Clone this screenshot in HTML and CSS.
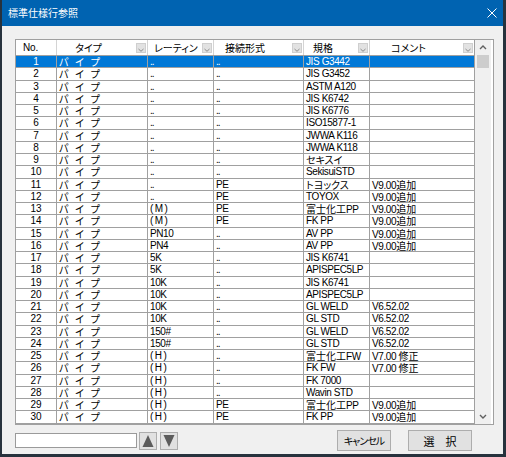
FILE: index.html
```html
<!DOCTYPE html>
<html lang="ja">
<head>
<meta charset="utf-8">
<title>標準仕様行参照</title>
<link rel="stylesheet" href="styles.css">
</head>
<body>
<div class="window">
  <div class="titlebar">
    <span class="title">標準仕様行参照</span>
    <svg class="close" width="10" height="10" viewBox="0 0 10 10"><path d="M0.5 0.5 L9.5 9.5 M9.5 0.5 L0.5 9.5" stroke="#fff" stroke-width="1" fill="none"/></svg>
  </div>
  <div class="content">
    <div class="grid">
      <div class="table">
        <div class="hrow">
          <div class="hcell"><span class="hlabel nolabel">No.</span></div>
          <div class="hcell"><span class="hlabel">タイプ</span><svg class="dd" width="10" height="10" viewBox="0 0 10 10"><rect x="0.5" y="0.5" width="9" height="9" fill="#e2e2e2" stroke="#cfcfcf"/><path d="M2.5 6 L5 8.3 L7.5 6" stroke="#8a8a8a" stroke-width="1" fill="none"/></svg></div>
          <div class="hcell"><span class="hlabel leftlabel">レーティン</span><svg class="dd" width="10" height="10" viewBox="0 0 10 10"><rect x="0.5" y="0.5" width="9" height="9" fill="#e2e2e2" stroke="#cfcfcf"/><path d="M2.5 6 L5 8.3 L7.5 6" stroke="#8a8a8a" stroke-width="1" fill="none"/></svg></div>
          <div class="hcell"><span class="hlabel">接続形式</span><svg class="dd" width="10" height="10" viewBox="0 0 10 10"><rect x="0.5" y="0.5" width="9" height="9" fill="#e2e2e2" stroke="#cfcfcf"/><path d="M2.5 6 L5 8.3 L7.5 6" stroke="#8a8a8a" stroke-width="1" fill="none"/></svg></div>
          <div class="hcell"><span class="hlabel">規格</span><svg class="dd" width="10" height="10" viewBox="0 0 10 10"><rect x="0.5" y="0.5" width="9" height="9" fill="#e2e2e2" stroke="#cfcfcf"/><path d="M2.5 6 L5 8.3 L7.5 6" stroke="#8a8a8a" stroke-width="1" fill="none"/></svg></div>
          <div class="hcell"><span class="hlabel">コメント</span><svg class="dd" width="10" height="10" viewBox="0 0 10 10"><rect x="0.5" y="0.5" width="9" height="9" fill="#e2e2e2" stroke="#cfcfcf"/><path d="M2.5 6 L5 8.3 L7.5 6" stroke="#8a8a8a" stroke-width="1" fill="none"/></svg></div>
        </div>
        <div class="row sel"><div class="cell num">1</div><div class="cell ja type">パ イ プ</div><div class="cell"><span class="nil">..</span></div><div class="cell"><span class="nil">..</span></div><div class="cell">JIS G3442</div><div class="cell"></div></div>
        <div class="row"><div class="cell num">2</div><div class="cell ja type">パ イ プ</div><div class="cell"><span class="nil">..</span></div><div class="cell"><span class="nil">..</span></div><div class="cell">JIS G3452</div><div class="cell"></div></div>
        <div class="row"><div class="cell num">3</div><div class="cell ja type">パ イ プ</div><div class="cell"><span class="nil">..</span></div><div class="cell"><span class="nil">..</span></div><div class="cell">ASTM A120</div><div class="cell"></div></div>
        <div class="row"><div class="cell num">4</div><div class="cell ja type">パ イ プ</div><div class="cell"><span class="nil">..</span></div><div class="cell"><span class="nil">..</span></div><div class="cell">JIS K6742</div><div class="cell"></div></div>
        <div class="row"><div class="cell num">5</div><div class="cell ja type">パ イ プ</div><div class="cell"><span class="nil">..</span></div><div class="cell"><span class="nil">..</span></div><div class="cell">JIS K6776</div><div class="cell"></div></div>
        <div class="row"><div class="cell num">6</div><div class="cell ja type">パ イ プ</div><div class="cell"><span class="nil">..</span></div><div class="cell"><span class="nil">..</span></div><div class="cell">ISO15877-1</div><div class="cell"></div></div>
        <div class="row"><div class="cell num">7</div><div class="cell ja type">パ イ プ</div><div class="cell"><span class="nil">..</span></div><div class="cell"><span class="nil">..</span></div><div class="cell">JWWA K116</div><div class="cell"></div></div>
        <div class="row"><div class="cell num">8</div><div class="cell ja type">パ イ プ</div><div class="cell"><span class="nil">..</span></div><div class="cell"><span class="nil">..</span></div><div class="cell">JWWA K118</div><div class="cell"></div></div>
        <div class="row"><div class="cell num">9</div><div class="cell ja type">パ イ プ</div><div class="cell"><span class="nil">..</span></div><div class="cell"><span class="nil">..</span></div><div class="cell"><span class="ja">セキスイ</span></div><div class="cell"></div></div>
        <div class="row"><div class="cell num">10</div><div class="cell ja type">パ イ プ</div><div class="cell"><span class="nil">..</span></div><div class="cell"><span class="nil">..</span></div><div class="cell">SekisuiSTD</div><div class="cell"></div></div>
        <div class="row"><div class="cell num">11</div><div class="cell ja type">パ イ プ</div><div class="cell"><span class="nil">..</span></div><div class="cell">PE</div><div class="cell"><span class="ja">トヨックス</span></div><div class="cell">V9.00<span class="ja">追加</span></div></div>
        <div class="row"><div class="cell num">12</div><div class="cell ja type">パ イ プ</div><div class="cell"><span class="nil">..</span></div><div class="cell">PE</div><div class="cell">TOYOX</div><div class="cell">V9.00<span class="ja">追加</span></div></div>
        <div class="row"><div class="cell num">13</div><div class="cell ja type">パ イ プ</div><div class="cell paren">( M )</div><div class="cell">PE</div><div class="cell"><span class="ja">富士化工</span>PP</div><div class="cell">V9.00<span class="ja">追加</span></div></div>
        <div class="row"><div class="cell num">14</div><div class="cell ja type">パ イ プ</div><div class="cell paren">( M )</div><div class="cell">PE</div><div class="cell">FK PP</div><div class="cell">V9.00<span class="ja">追加</span></div></div>
        <div class="row"><div class="cell num">15</div><div class="cell ja type">パ イ プ</div><div class="cell">PN10</div><div class="cell"><span class="nil">..</span></div><div class="cell">AV PP</div><div class="cell">V9.00<span class="ja">追加</span></div></div>
        <div class="row"><div class="cell num">16</div><div class="cell ja type">パ イ プ</div><div class="cell">PN4</div><div class="cell"><span class="nil">..</span></div><div class="cell">AV PP</div><div class="cell">V9.00<span class="ja">追加</span></div></div>
        <div class="row"><div class="cell num">17</div><div class="cell ja type">パ イ プ</div><div class="cell">5K</div><div class="cell"><span class="nil">..</span></div><div class="cell">JIS K6741</div><div class="cell"></div></div>
        <div class="row"><div class="cell num">18</div><div class="cell ja type">パ イ プ</div><div class="cell">5K</div><div class="cell"><span class="nil">..</span></div><div class="cell">APISPEC5LP</div><div class="cell"></div></div>
        <div class="row"><div class="cell num">19</div><div class="cell ja type">パ イ プ</div><div class="cell">10K</div><div class="cell"><span class="nil">..</span></div><div class="cell">JIS K6741</div><div class="cell"></div></div>
        <div class="row"><div class="cell num">20</div><div class="cell ja type">パ イ プ</div><div class="cell">10K</div><div class="cell"><span class="nil">..</span></div><div class="cell">APISPEC5LP</div><div class="cell"></div></div>
        <div class="row"><div class="cell num">21</div><div class="cell ja type">パ イ プ</div><div class="cell">10K</div><div class="cell"><span class="nil">..</span></div><div class="cell">GL WELD</div><div class="cell">V6.52.02</div></div>
        <div class="row"><div class="cell num">22</div><div class="cell ja type">パ イ プ</div><div class="cell">10K</div><div class="cell"><span class="nil">..</span></div><div class="cell">GL STD</div><div class="cell">V6.52.02</div></div>
        <div class="row"><div class="cell num">23</div><div class="cell ja type">パ イ プ</div><div class="cell">150#</div><div class="cell"><span class="nil">..</span></div><div class="cell">GL WELD</div><div class="cell">V6.52.02</div></div>
        <div class="row"><div class="cell num">24</div><div class="cell ja type">パ イ プ</div><div class="cell">150#</div><div class="cell"><span class="nil">..</span></div><div class="cell">GL STD</div><div class="cell">V6.52.02</div></div>
        <div class="row"><div class="cell num">25</div><div class="cell ja type">パ イ プ</div><div class="cell paren">( H )</div><div class="cell"><span class="nil">..</span></div><div class="cell"><span class="ja">富士化工</span>FW</div><div class="cell">V7.00 <span class="ja">修正</span></div></div>
        <div class="row"><div class="cell num">26</div><div class="cell ja type">パ イ プ</div><div class="cell paren">( H )</div><div class="cell"><span class="nil">..</span></div><div class="cell">FK FW</div><div class="cell">V7.00 <span class="ja">修正</span></div></div>
        <div class="row"><div class="cell num">27</div><div class="cell ja type">パ イ プ</div><div class="cell paren">( H )</div><div class="cell"><span class="nil">..</span></div><div class="cell">FK 7000</div><div class="cell"></div></div>
        <div class="row"><div class="cell num">28</div><div class="cell ja type">パ イ プ</div><div class="cell paren">( H )</div><div class="cell"><span class="nil">..</span></div><div class="cell">Wavin STD</div><div class="cell"></div></div>
        <div class="row"><div class="cell num">29</div><div class="cell ja type">パ イ プ</div><div class="cell paren">( H )</div><div class="cell">PE</div><div class="cell"><span class="ja">富士化工</span>PP</div><div class="cell">V9.00<span class="ja">追加</span></div></div>
        <div class="row"><div class="cell num">30</div><div class="cell ja type">パ イ プ</div><div class="cell paren">( H )</div><div class="cell">PE</div><div class="cell">FK PP</div><div class="cell">V9.00<span class="ja">追加</span></div></div>
      </div>
      <div class="vscroll">
        <div class="sbtn"><svg width="16" height="15" viewBox="0 0 16 15"><path d="M5 9 L8 6 L11 9" stroke="#606060" stroke-width="1.4" fill="none"/></svg></div>
        <div class="thumb"></div>
        <div class="track"></div>
        <div class="sbtn"><svg width="16" height="15" viewBox="0 0 16 15"><path d="M5 6 L8 9 L11 6" stroke="#606060" stroke-width="1.4" fill="none"/></svg></div>
      </div>
    </div>
    <div class="bottom">
      <input class="search" type="text">
      <button class="arrow up"><svg width="16" height="16" viewBox="0 0 16 16"><polygon points="2.5,14 8,2 13.5,14" fill="#5c5c5c"/></svg></button>
      <button class="arrow down"><svg width="16" height="16" viewBox="0 0 16 16"><polygon points="2.5,2 13.5,2 8,14" fill="#5c5c5c"/></svg></button>
      <button class="btn cancel">キャンセル</button>
      <button class="btn ok">選　択</button>
    </div>
  </div>
</div>
</body>
</html>
```

FILE: styles.css
```css
html, body {
  margin: 0;
  padding: 0;
}
body {
  width: 506px;
  height: 457px;
  overflow: hidden;
  background: #27323d;
  font-family: "Liberation Sans", "Noto Sans CJK JP", sans-serif;
  font-size: 10px;
  color: #000;
}
.window {
  margin: 0 3px 0 2px;
  height: 454px;
  background: #f0f0f0;
  display: flex;
  flex-direction: column;
}
.titlebar {
  height: 26px;
  flex: none;
  background: #0063b1;
  color: #fff;
  display: flex;
  align-items: center;
  justify-content: space-between;
  padding: 0 6px;
}
.title {
  font-family: "Noto Sans CJK JP", sans-serif;
  font-size: 10px;
  line-height: 12px;
}
.close {
  display: block;
}
.content {
  flex: 1;
  padding: 13px 0 0 13px;
}
.grid {
  display: flex;
  width: 477px;
  border: 1px solid #a0a0a0;
  background: #fff;
}
.table {
  width: 459px;
}
.hrow, .row {
  display: grid;
  grid-template-columns: 41px 91px 66px 90px 66px 105px;
}
.hrow {
  height: 16px;
  box-sizing: border-box;
  border-bottom: 1px solid #a0a0a0;
}
.hcell {
  display: flex;
  align-items: center;
  min-width: 0;
  border-right: 1px solid #d4d4d4;
}
.hcell:last-child {
  border-right-color: #a0a0a0;
}
.hlabel {
  flex: 1;
  min-width: 0;
  text-align: center;
  padding-right: 16px;
  white-space: nowrap;
  overflow-x: clip;
  line-height: 15px;
  font-family: "Noto Sans CJK JP", sans-serif;
  font-feature-settings: "palt";
  font-size: 10px;
}
.hlabel.nolabel {
  font-family: "Liberation Sans", sans-serif;
  font-size: 10px;
  letter-spacing: -0.2px;
  text-align: left;
  padding: 0 0 0 7px;
}
.hlabel.leftlabel {
  text-align: left;
  padding: 0 0 0 6px;
}
.dd {
  display: block;
  flex: none;
  margin-right: 1px;
}
.row {
  height: 12.25px;
  box-sizing: border-box;
  border-bottom: 1px solid #a0a0a0;
}
.cell {
  border-right: 1px solid #a0a0a0;
  padding: 0 2px;
  line-height: 11px;
  letter-spacing: -0.4px;
  white-space: nowrap;
  overflow-x: clip;
  overflow-y: visible;
  min-width: 0;
}
.cell.num {
  text-align: center;
  padding: 0;
  letter-spacing: 0;
}
.row.sel {
  background: #0078d7;
  color: #fff;
}
.ja {
  font-family: "Noto Sans CJK JP", sans-serif;
  font-feature-settings: "palt";
  font-size: 10px;
  letter-spacing: 0;
}
.type {
  word-spacing: 4.5px;
  padding-left: 2px;
}
.nil {
  letter-spacing: -1px;
}
.paren {
  word-spacing: -0.5px;
}
.vscroll {
  width: 16px;
  background: #f0f0f0;
  display: flex;
  flex-direction: column;
}
.sbtn {
  height: 15px;
  flex: none;
}
.sbtn svg {
  display: block;
}
.thumb {
  height: 13px;
  margin: 0 2px;
  background: #cdcdcd;
  flex: none;
}
.track {
  flex: 1;
}
.bottom {
  display: flex;
  align-items: center;
  height: 21px;
  margin-top: 5.5px;
}
.search {
  width: 122px;
  height: 15px;
  box-sizing: border-box;
  border: 1px solid #9a9a9a;
  background: #fff;
  margin: 0;
  padding: 0;
}
.arrow {
  width: 18px;
  height: 18px;
  box-sizing: border-box;
  border: 1px solid #adadad;
  background: #e1e1e1;
  padding: 0;
  margin: 0 0 0 2px;
  display: flex;
  align-items: center;
  justify-content: center;
}
.arrow.down {
  margin-left: 3px;
}
.arrow svg {
  display: block;
}
.btn {
  height: 21px;
  box-sizing: border-box;
  border: 1px solid #adadad;
  background: #e1e1e1;
  padding: 0;
  margin: 0;
  color: #000;
  font-family: "Noto Sans CJK JP", sans-serif;
  font-feature-settings: "palt";
  font-size: 10px;
}
.cancel {
  width: 54px;
  margin-left: 159px;
  letter-spacing: -1px;
}
.ok {
  width: 64px;
  margin-left: 17px;
  font-size: 11px;
  font-feature-settings: normal;
}
```
